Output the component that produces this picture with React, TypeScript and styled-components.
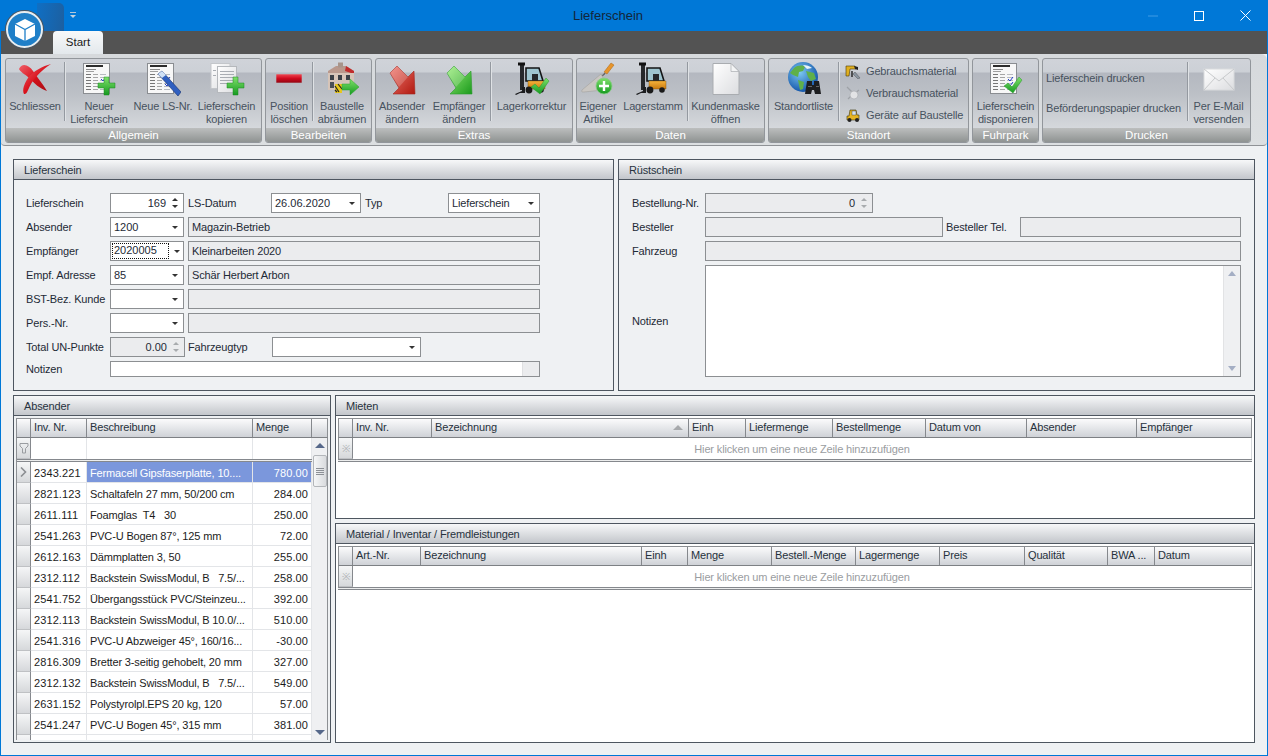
import React from "react";
import styled, { createGlobalStyle } from "styled-components";

const GlobalStyle = createGlobalStyle`
  html, body { margin: 0; padding: 0; background: #eff1f3; }
  body {
    font-family: "Liberation Sans", Arial, sans-serif;
    font-size: 11px;
    letter-spacing: -0.15px;
    color: #1e2a36;
  }
  * { box-sizing: border-box; }
`;

const Window = styled.div`
  width: 1268px;
  height: 756px;
  border: 1px solid #0078d7;
  border-top: 0;
  display: flex;
  flex-direction: column;
  overflow: hidden;
  background: #eff1f3;
  position: relative;
`;

/* ---------- title bar ---------- */

const TitleBar = styled.div`
  height: 31px;
  flex: none;
  background: #0078d7;
  display: flex;
  align-items: center;
`;

const QuickAccess = styled.div`
  width: 85px;
  height: 100%;
  position: relative;
`;

const AppTile = styled.div`
  position: absolute;
  left: 36px;
  top: 3px;
  width: 27px;
  height: 28px;
  border-radius: 0 5px 0 0;
  background: linear-gradient(100deg, #0f6fc4, #1d5f9f);
`;

const QuickArrow = styled.div`
  position: absolute;
  left: 69px;
  top: 12px;
  width: 6px;
  height: 6px;
  border-top: 1px solid #b4c6d8;
  &::after {
    content: "";
    position: absolute;
    left: 0;
    top: 2px;
    border-left: 3px solid transparent;
    border-right: 3px solid transparent;
    border-top: 3px solid #c3d2e0;
  }
`;

const AppOrb = styled.div`
  position: absolute;
  left: 5px;
  top: 11px;
  width: 37px;
  height: 37px;
  border-radius: 50%;
  background: #1f7fc8;
  border: 2px solid #e8eef2;
  box-shadow: 0 0 0 1px #4a5560;
  display: flex;
  align-items: center;
  justify-content: center;
  z-index: 5;
`;

const TitleText = styled.div`
  flex: 1;
  text-align: center;
  font-size: 13px;
  letter-spacing: 0;
  color: #13263a;
  padding-bottom: 1px;
`;

const WindowControls = styled.div`
  display: flex;
  width: 137px;
  height: 100%;
`;

const ControlButton = styled.div`
  width: 46px;
  flex: none;
  display: flex;
  align-items: center;
  justify-content: center;
`;

/* ---------- ribbon ---------- */

const TabStrip = styled.div`
  height: 23px;
  flex: none;
  background: #535353;
  padding-left: 52px;
  display: flex;
  align-items: flex-end;
`;

const Tab = styled.div`
  width: 50px;
  height: 23px;
  border-radius: 4px 4px 0 0;
  background: linear-gradient(#f8f9fa, #e3e8ec);
  color: #1a1a1a;
  font-size: 11.5px;
  letter-spacing: 0;
  text-align: center;
  line-height: 23px;
`;

const Ribbon = styled.div`
  height: 92px;
  flex: none;
  background: linear-gradient(#d6d9dc, #dcdfe1);
  border-radius: 0 6px 4px 4px;
  border-bottom: 1px solid #8f9296;
  margin: 0;
  padding: 4px 0 0 4px;
  display: flex;
  gap: 3px;
`;

const Group = styled.div<{ $w: number }>`
  width: ${(p) => p.$w}px;
  height: 85px;
  flex: none;
  border: 1px solid #92969b;
  border-radius: 3px;
  display: flex;
  flex-direction: column;
  overflow: hidden;
  background: linear-gradient(#d0d3d9 0, #ccd0d6 13px, #b4b8c0 14px, #bcc0c6 35px, #d5d8dc 69px);
`;

const GroupBody = styled.div`
  height: 69px;
  flex: none;
  display: flex;
`;

const GroupLabel = styled.div`
  height: 14px;
  flex: none;
  background: linear-gradient(#bcbebe, #8f9392);
  color: #fff;
  text-align: center;
  line-height: 14px;
  font-size: 11.5px;
  letter-spacing: 0;
`;

const BigButton = styled.div<{ $w: number }>`
  width: ${(p) => p.$w}px;
  flex: none;
  display: flex;
  flex-direction: column;
  align-items: center;
  padding-top: 3px;
`;

const BigLabel = styled.div`
  margin-top: 4px;
  text-align: center;
  line-height: 13px;
  color: #47525e;
  white-space: nowrap;
`;

const Separator = styled.div`
  width: 1px;
  flex: none;
  margin: 3px 0 7px;
  background: #9499a0;
  box-shadow: 1px 0 0 #dfe2e5;
`;

const SmallList = styled.div<{ $w: number }>`
  width: ${(p) => p.$w}px;
  flex: none;
  padding: 1px 0 0 6px;
  display: flex;
  flex-direction: column;
`;

const SmallItem = styled.div`
  height: 22px;
  display: flex;
  align-items: center;
  gap: 5px;
  color: #47525e;
  white-space: nowrap;
`;

const PrintList = styled.div`
  width: 144px;
  flex: none;
  padding: 4px 0 0 3px;
  display: flex;
  flex-direction: column;
  color: #47525e;
`;

const PrintItem = styled.div`
  height: 30px;
  display: flex;
  align-items: center;
  white-space: nowrap;
`;

/* ---------- panels ---------- */

const Content = styled.div`
  flex: 1;
  min-height: 0;
  padding: 13px 12px 12px;
  display: flex;
  flex-direction: column;
  gap: 4px;
`;

const TopRow = styled.div`
  height: 232px;
  flex: none;
  display: flex;
  gap: 4px;
`;

const BottomRow = styled.div`
  flex: 1;
  min-height: 0;
  display: flex;
  gap: 4px;
`;

const RightStack = styled.div`
  flex: 1;
  min-width: 0;
  display: flex;
  flex-direction: column;
  gap: 4px;
`;

const Panel = styled.section<{ $w?: number; $h?: number; $white?: boolean }>`
  ${(p) => (p.$w ? `width: ${p.$w}px; flex: none;` : "flex: 1; min-width: 0;")}
  ${(p) => (p.$h ? `height: ${p.$h}px; flex: none;` : "")}
  border: 1px solid #4e5660;
  display: flex;
  flex-direction: column;
  background: ${(p) => (p.$white ? "#fff" : "#eff1f3")};
  min-height: 0;
`;

const PanelHeader = styled.div`
  height: 20px;
  flex: none;
  padding: 1px 0 0 10px;
  background: linear-gradient(#f7f8f9, #c3c6cb);
  border-bottom: 1px solid #4e5660;
  display: flex;
  align-items: center;
  color: #27323e;
`;

const FormBody = styled.div<{ $pl?: number }>`
  padding: 13px 12px 0 ${(p) => p.$pl ?? 12}px;
  display: flex;
  flex-direction: column;
  gap: 4px;
`;

const FormRow = styled.div<{ $h?: number }>`
  height: ${(p) => p.$h ?? 20}px;
  display: flex;
  align-items: center;
`;

const FieldLabel = styled.div<{ $w: number; $ml?: number }>`
  width: ${(p) => p.$w}px;
  margin-left: ${(p) => p.$ml ?? 0}px;
  flex: none;
  white-space: nowrap;
  color: #1e2a36;
`;

const Field = styled.div<{ $w?: number; $ml?: number; $disabled?: boolean; $h?: number }>`
  ${(p) => (p.$w ? `width: ${p.$w}px; flex: none;` : "flex: 1; min-width: 0;")}
  height: ${(p) => p.$h ?? 20}px;
  margin-left: ${(p) => p.$ml ?? 0}px;
  border: 1px solid #8c8f92;
  background: ${(p) => (p.$disabled ? "#ebecee" : "#fff")};
  display: flex;
  align-items: center;
  color: #1e2a36;
  position: relative;
`;

const FieldText = styled.div<{ $right?: boolean; $pl?: number; $num?: boolean }>`
  flex: 1;
  min-width: 0;
  padding-left: ${(p) => p.$pl ?? 3}px;
  padding-right: 2px;
  text-align: ${(p) => (p.$right ? "right" : "left")};
  white-space: nowrap;
  letter-spacing: ${(p) => (p.$num ? "0" : "inherit")};
`;

const FocusText = styled.div`
  flex: none;
  width: 57px;
  height: 16px;
  margin-left: 1px;
  padding-left: 2px;
  line-height: 15px;
  letter-spacing: 0;
  outline: 1px dotted #111;
  outline-offset: -1px;
`;

const DropArrow = styled.div`
  width: 16px;
  flex: none;
  display: flex;
  justify-content: center;
  &::after {
    content: "";
    border-left: 3px solid transparent;
    border-right: 3px solid transparent;
    border-top: 3px solid #333;
  }
`;

const Spinner = styled.div<{ $muted?: boolean }>`
  width: 14px;
  flex: none;
  display: flex;
  flex-direction: column;
  gap: 4px;
  align-items: center;
  margin-right: 1px;
  --spin: ${(p) => (p.$muted ? "#a8abae" : "#333")};
  &::before {
    content: "";
    border-left: 3px solid transparent;
    border-right: 3px solid transparent;
    border-bottom: 3px solid var(--spin);
  }
  &::after {
    content: "";
    border-left: 3px solid transparent;
    border-right: 3px solid transparent;
    border-top: 3px solid var(--spin);
  }
`;

const NoteEnd = styled.div`
  width: 17px;
  height: 100%;
  flex: none;
  background: #ebecee;
  border-left: 1px solid #dfe0e2;
  margin-left: auto;
`;

const TextAreaScroll = styled.div`
  width: 17px;
  height: 100%;
  flex: none;
  margin-left: auto;
  background: #eff0f2;
  border-left: 1px solid #e2e3e5;
  display: flex;
  flex-direction: column;
  align-items: center;
  justify-content: space-between;
  padding: 5px 0;
`;

const ScrollArrow = styled.div<{ $down?: boolean; $color?: string; $size?: number }>`
  width: 0;
  height: 0;
  flex: none;
  border-left: ${(p) => p.$size ?? 4}px solid transparent;
  border-right: ${(p) => p.$size ?? 4}px solid transparent;
  ${(p) =>
    p.$down
      ? `border-top: 5px solid ${p.$color ?? "#a4aec4"};`
      : `border-bottom: 5px solid ${p.$color ?? "#a4aec4"};`}
`;

/* ---------- data grids ---------- */

const GridWrap = styled.div`
  flex: 1;
  min-height: 0;
  padding: 2px 2px 2px;
  display: flex;
  flex-direction: column;
`;

const HeaderRow = styled.div<{ $cols: string }>`
  height: 20px;
  flex: none;
  display: grid;
  grid-template-columns: ${(p) => p.$cols};
  border: 1px solid #8c8f93;
  border-bottom-color: #7d8084;
  background: linear-gradient(#fbfbfc, #cfd2d7);
`;

const HeaderCell = styled.div`
  border-right: 1px solid #85888d;
  padding-left: 3px;
  line-height: 17px;
  color: #26313c;
  white-space: nowrap;
  overflow: hidden;
  position: relative;
  &:last-child {
    border-right: 0;
  }
`;

const SortMark = styled.div`
  position: absolute;
  right: 5px;
  top: 6px;
  border-left: 5px solid transparent;
  border-right: 5px solid transparent;
  border-bottom: 5px solid #a7a9ac;
`;

const NewRow = styled.div`
  height: 21px;
  flex: none;
  display: flex;
  border-left: 1px solid #8c8f93;
  border-right: 1px solid #d5d7da;
`;

const NewRowHint = styled.div`
  flex: 1;
  text-align: center;
  line-height: 22px;
  color: #9a9da1;
`;

const IndicatorCell = styled.div`
  width: 14px;
  flex: none;
  border-right: 1px solid #85888d;
  border-bottom: 1px solid #bfc1c4;
  background: linear-gradient(#f5f6f7, #d6d8db);
  display: flex;
  align-items: center;
  justify-content: center;
  color: #b0b3b6;
  font-size: 10px;
`;

const DoubleRule = styled.div`
  height: 3px;
  flex: none;
  border-top: 1px solid #85888d;
  border-bottom: 1px solid #85888d;
  background: #eceded;
`;

const ListFrame = styled.div`
  flex: 1;
  min-height: 0;
  display: flex;
  border-left: 1px solid #8c8f93;
  border-right: 1px solid #8c8f93;
  overflow: hidden;
`;

const ListColumn = styled.div`
  width: 295px;
  flex: none;
  display: flex;
  flex-direction: column;
  background: #fff;
  overflow: hidden;
`;

const FilterRow = styled.div`
  height: 21px;
  flex: none;
  display: grid;
  grid-template-columns: 14px 56px 166px 59px;
`;

const FilterCell = styled.div`
  border-right: 1px solid #e3e5e8;
`;

const DataRow = styled.div`
  height: 21px;
  flex: none;
  display: grid;
  grid-template-columns: 14px 56px 166px 59px;
  line-height: 21px;
`;

const DataCell = styled.div<{ $right?: boolean; $selected?: boolean; $num?: boolean }>`
  padding: 1px 3px 0;
  white-space: pre;
  overflow: hidden;
  text-align: ${(p) => (p.$right ? "right" : "left")};
  letter-spacing: ${(p) => (p.$num ? "0.1px" : "inherit")};
  border-right: 1px solid #e3e5e8;
  border-bottom: 1px solid #e3e5e8;
  background: ${(p) => (p.$selected ? "#7b97dc" : "#fff")};
  color: ${(p) => (p.$selected ? "#fff" : "#1c1c1c")};
`;

const ScrollTrack = styled.div`
  width: 15px;
  flex: none;
  background: #eff0f2;
  display: flex;
  flex-direction: column;
  align-items: center;
  padding: 5px 0 5px;
`;

const ScrollThumb = styled.div`
  width: 14px;
  height: 32px;
  margin-top: 7px;
  border: 1px solid #b3b6ba;
  border-radius: 2px;
  background: linear-gradient(90deg, #f5f6f7, #d9dbde);
  display: flex;
  flex-direction: column;
  justify-content: center;
  align-items: center;
  gap: 1px;
  i {
    display: block;
    width: 8px;
    height: 1px;
    background: #8c9096;
  }
`;

const Spacer = styled.div`
  flex: 1;
`;

/* ---------- icons ---------- */

const IconSvg = styled.svg`
  width: 36px;
  height: 34px;
  flex: none;
  display: block;
`;

const SmallSvg = styled.svg`
  width: 16px;
  height: 16px;
  flex: none;
`;

const SharedDefs = styled.svg`
  position: absolute;
  width: 0;
  height: 0;
`;

const Defs = () => (
  <SharedDefs>
    <defs>
      <linearGradient id="red" x1="0" y1="0" x2="1" y2="1">
        <stop offset="0" stopColor="#f0606a" />
        <stop offset="0.5" stopColor="#d8121c" />
        <stop offset="1" stopColor="#a90d14" />
      </linearGradient>
      <linearGradient id="redBar" x1="0" y1="0" x2="0" y2="1">
        <stop offset="0" stopColor="#f14a55" />
        <stop offset="0.5" stopColor="#cf0a1e" />
        <stop offset="1" stopColor="#8e0612" />
      </linearGradient>
      <linearGradient id="green" x1="0" y1="0" x2="0" y2="1">
        <stop offset="0" stopColor="#7fe06a" />
        <stop offset="1" stopColor="#159a20" />
      </linearGradient>
      <linearGradient id="greenDiag" x1="0" y1="0" x2="1" y2="1">
        <stop offset="0" stopColor="#9bee7a" />
        <stop offset="1" stopColor="#1a9a1c" />
      </linearGradient>
      <linearGradient id="redDiag" x1="0" y1="0" x2="1" y2="1">
        <stop offset="0" stopColor="#f07a70" />
        <stop offset="1" stopColor="#b0180f" />
      </linearGradient>
      <linearGradient id="paper" x1="0" y1="0" x2="1" y2="1">
        <stop offset="0" stopColor="#ffffff" />
        <stop offset="1" stopColor="#dcdde0" />
      </linearGradient>
      <linearGradient id="orange" x1="0" y1="0" x2="0" y2="1">
        <stop offset="0" stopColor="#f6b23a" />
        <stop offset="1" stopColor="#c97a10" />
      </linearGradient>
      <radialGradient id="sea" cx="0.4" cy="0.35" r="0.7">
        <stop offset="0" stopColor="#7cc8f2" />
        <stop offset="1" stopColor="#0e4fa6" />
      </radialGradient>
    </defs>
  </SharedDefs>
);

const PlusMark = ({ x, y }: { x: number; y: number }) => (
  <path
    transform={`translate(${x} ${y})`}
    d="M6 0h5v6h6v5h-6v7H6v-7H0V6h6z"
    fill="url(#green)"
    stroke="#1b8a22"
    strokeWidth="0.5"
  />
);

const CheckMark = ({ x, y }: { x: number; y: number }) => (
  <path
    transform={`translate(${x} ${y})`}
    d="M0 9l4-3 4 4L15 0l3 3-9 13z"
    fill="url(#green)"
    stroke="#2a9a2c"
    strokeWidth="0.5"
  />
);

const SheetLines = () => (
  <g>
    <rect x="5" y="3" width="17" height="2" fill="#2c2c2c" />
    <rect x="5" y="7" width="10" height="1" fill="#8a8a8a" />
    <rect x="5" y="9" width="8" height="1" fill="#a0a0a0" />
    {[12, 15, 18, 21, 24, 27].map((y) => (
      <g key={y}>
        <rect x="5" y={y} width="5" height="1" fill="#777" />
        <rect x="12" y={y} width="5" height="1" fill="#a5a5a5" />
        <rect x="19" y={y} width="6" height="1" fill="#b8bbc0" />
      </g>
    ))}
    <path d="M20 17l2 2 3-4M20 22l2 2 3-4" stroke="#2340c8" strokeWidth="1" fill="none" />
  </g>
);

const Sheet = () => (
  <g>
    <rect x="2.5" y="1.5" width="26" height="30" fill="#f7f7f7" stroke="#8a8d91" />
    <SheetLines />
  </g>
);

const CloseIcon = () => (
  <IconSvg viewBox="0 0 36 34">
    <path d="M2 7C5 0 12 3 16 9c4 6 9 12 14 20-7-2-13-8-18-13C8 12 3 10 2 7z" fill="url(#red)" />
    <path d="M34 2C26 4 16 9 11 16 7 22 5 28 7 32c3 1 4-5 7-10C18 15 26 7 34 2z" fill="url(#red)" />
  </IconSvg>
);

const NewDocIcon = () => (
  <IconSvg viewBox="0 0 36 34">
    <Sheet />
    <PlusMark x={17} y={15} />
  </IconSvg>
);

const NewNumberIcon = () => (
  <IconSvg viewBox="0 0 36 34">
    <Sheet />
    <path d="M13 12l4-3 19 21-3 4z" fill="#2f5fc0" stroke="#17336f" strokeWidth="0.6" />
    <path d="M13 12l4-3 4 4-4 3z" fill="#cfe0f5" />
  </IconSvg>
);

const CopyDocIcon = () => (
  <IconSvg viewBox="0 0 36 34">
    <rect x="2" y="1.5" width="19" height="25" fill="url(#paper)" stroke="#c3c6ca" />
    <rect x="8.5" y="4.5" width="19" height="26" fill="url(#paper)" stroke="#b5b8bc" />
    {[9, 12, 15, 18, 21].map((y) => (
      <rect key={y} x="11" y={y} width="14" height="1" fill="#a9adb3" />
    ))}
    <rect x="4" y="8" width="3" height="1" fill="#a9adb3" />
    <rect x="4" y="13" width="3" height="1" fill="#a9adb3" />
    <PlusMark x={18} y={15} />
  </IconSvg>
);

const MinusIcon = () => (
  <IconSvg viewBox="0 0 36 34">
    <rect x="5" y="12" width="26" height="9" fill="url(#redBar)" stroke="#b8bcc0" strokeWidth="0.6" />
  </IconSvg>
);

const HouseIcon = () => (
  <IconSvg viewBox="0 0 36 34">
    <path d="M4 9l8-5h10l8 5v3H4z" fill="#b9988c" />
    <path d="M22 4l8 5v3l-9-3z" fill="#c02c2c" />
    <rect x="14" y="0.5" width="5" height="5" fill="#a8948a" />
    <rect x="4" y="11" width="26" height="17" fill="#d6c4b8" />
    <rect x="6" y="13" width="4" height="5" fill="#3a3f46" />
    <rect x="14" y="13" width="4" height="5" fill="#3a3f46" />
    <rect x="22" y="13" width="4" height="5" fill="#3a3f46" />
    <rect x="6" y="20" width="4" height="6" fill="#4a4f55" />
    <rect x="11" y="22" width="7" height="9" fill="#e7c71a" />
    <path d="M11 24l4 6M14 22l4 5M11 28l2 2" stroke="#222" strokeWidth="1.2" />
    <path d="M18 22h8v-5l9 8-9 8v-5h-8z" fill="url(#green)" stroke="#2aa52e" strokeWidth="0.5" />
  </IconSvg>
);

const DiagArrow = ({ fill, edge }: { fill: string; edge: string }) => (
  <IconSvg viewBox="0 0 36 34">
    <path
      d="M6 11l7-7 11 11 6-6 1 23H9l6-6z"
      fill={`url(#${fill})`}
      stroke={edge}
      strokeWidth="0.6"
    />
    <path d="M6 11l7-7 11 11-9 10z" fill="#fff" opacity="0.2" />
  </IconSvg>
);

const ForkliftParts = () => (
  <g>
    <rect x="6" y="1" width="4" height="27" fill="#26282b" />
    <rect x="4" y="0.5" width="7" height="3" fill="#111" />
    <path d="M1 32l7-3v-4h3v6H6l-4 2z" fill="#1c1d1f" />
    <path d="M12 6h13l4 13H12z" fill="#9ec4cf" stroke="#141516" strokeWidth="1.6" />
    <rect x="18" y="12" width="6" height="7" fill="#25272a" />
    <path d="M14 19h17v8H14z" fill="url(#orange)" stroke="#7b4c08" strokeWidth="0.4" />
    <circle cx="15" cy="28" r="3.4" fill="#1a1a1a" />
    <circle cx="27" cy="28" r="2.8" fill="#1a1a1a" />
  </g>
);

const ForkliftIcon = () => (
  <IconSvg viewBox="0 0 36 34">
    <ForkliftParts />
  </IconSvg>
);

const ForkliftCheckIcon = () => (
  <IconSvg viewBox="0 0 36 34">
    <ForkliftParts />
    <CheckMark x={17} y={16} />
  </IconSvg>
);

const TrowelIcon = () => (
  <IconSvg viewBox="0 0 36 34">
    <path d="M24 10L31 1l3 2-7 9z" fill="#e8952a" stroke="#a86412" strokeWidth="0.5" />
    <path d="M25 11c-1 2-3 3-5 3" stroke="#666" strokeWidth="1.4" fill="none" />
    <path d="M21 12L2 28c-1 2 0 2 2 2l19-2c2-5 1-12-2-16z" fill="#c9c6c2" stroke="#9c9a97" strokeWidth="0.5" />
    <circle cx="24" cy="24" r="8" fill="url(#green)" stroke="#8cc98a" strokeWidth="0.8" />
    <path d="M24 19v10M19 24h10" stroke="#fff" strokeWidth="2.4" />
  </IconSvg>
);

const PageIcon = () => (
  <IconSvg viewBox="0 0 36 34">
    <path d="M5 1.5h18l8 8v23H5z" fill="url(#paper)" stroke="#a9acb0" />
    <path d="M23 1.5v8h8z" fill="#f3f4f5" stroke="#a9acb0" strokeWidth="0.7" />
  </IconSvg>
);

const GlobeIcon = () => (
  <IconSvg viewBox="0 0 36 34">
    <circle cx="17" cy="15" r="15" fill="url(#sea)" />
    <path d="M8 6c4-3 9-3 11-1l-2 4-4 1-1 5-5-2-3-2zM20 9l8 2 2 6-5 2-3-4zM12 18l6 2-1 7-3 1z" fill="#5fb04a" />
    <path d="M17 3c3 0 7 1 9 3l-5 1z" fill="#e8f3f6" />
    <path d="M21 19h5v4h2v-4h5l2 13h-6l-1-4h-2l-1 4h-6z" fill="#1d1e20" />
    <rect x="22" y="24" width="4" height="1" fill="#666" />
    <rect x="30" y="24" width="3" height="1" fill="#666" />
  </IconSvg>
);

const EnvelopeIcon = () => (
  <IconSvg viewBox="0 0 36 34">
    <rect x="3" y="7" width="30" height="21" fill="url(#paper)" stroke="#d9dbdd" />
    <path d="M3 7l15 12L33 7M3 28l11-12M33 28L22 16" fill="none" stroke="#c8cacc" />
  </IconSvg>
);

const DrillIcon = () => (
  <SmallSvg viewBox="0 0 16 16">
    <path d="M1 3h9l1 3H5l-1 7H1z" fill="#e0b020" stroke="#4a3a08" strokeWidth="0.6" />
    <path d="M9 3l4 1v3l-3-1z" fill="#222" />
    <path d="M10 9l5 6-2 1-5-5z" fill="#8a95a0" stroke="#444" strokeWidth="0.4" />
    <path d="M7 8v6" stroke="#222" strokeWidth="1.4" />
  </SmallSvg>
);

const ScrewsIcon = () => (
  <SmallSvg viewBox="0 0 16 16">
    <path d="M2 2l6 6M14 5L9 9M3 14l5-5" stroke="#9ea2a7" strokeWidth="1.3" />
    <circle cx="9" cy="10" r="4" fill="#e2e3e5" stroke="#a5a8ac" strokeWidth="0.6" />
  </SmallSvg>
);

const LoaderIcon = () => (
  <SmallSvg viewBox="0 0 16 16">
    <path d="M5 3h6l1 5h2v5H2V9h2z" fill="#e6b422" stroke="#3a3206" strokeWidth="0.6" />
    <rect x="7" y="4" width="4" height="4" fill="#d7e4ea" stroke="#333" strokeWidth="0.4" />
    <circle cx="4.5" cy="13" r="2" fill="#222" />
    <circle cx="12" cy="13" r="2" fill="#222" />
  </SmallSvg>
);

const CubeIcon = () => (
  <svg width="26" height="26" viewBox="0 0 26 26">
    <path d="M13 2l10 5v12l-10 5-10-5V7z" fill="#fff" />
    <path d="M13 12.5v11.5M3 7l10 5.5L23 7" stroke="#1f7fc8" strokeWidth="1.3" fill="none" />
  </svg>
);

/* ---------- data ---------- */

const rows: [string, string, string][] = [
  ["2343.221", "Fermacell Gipsfaserplatte, 10....", "780.00"],
  ["2821.123", "Schaltafeln 27 mm, 50/200 cm", "284.00"],
  ["2611.111", "Foamglas  T4   30", "250.00"],
  ["2541.263", "PVC-U Bogen 87°, 125 mm", "72.00"],
  ["2612.163", "Dämmplatten 3, 50", "255.00"],
  ["2312.112", "Backstein SwissModul, B   7.5/...", "258.00"],
  ["2541.752", "Übergangsstück PVC/Steinzeu...", "392.00"],
  ["2312.113", "Backstein SwissModul, B 10.0/...", "510.00"],
  ["2541.316", "PVC-U Abzweiger 45°, 160/16...", "-30.00"],
  ["2816.309", "Bretter 3-seitig gehobelt, 20 mm", "327.00"],
  ["2312.132", "Backstein SwissModul, B   7.5/...", "549.00"],
  ["2631.152", "Polystyrolpl.EPS 20 kg, 120", "57.00"],
  ["2541.247", "PVC-U Bogen 45°, 315 mm", "381.00"],
  ["", "", ""],
];

const mietenCols = "14px 79px 257px 57px 87px 93px 101px 110px 114px";
const mietenHeads = ["", "Inv. Nr.", "Bezeichnung", "Einh", "Liefermenge", "Bestellmenge", "Datum von", "Absender", "Empfänger"];
const materialCols = "14px 68px 221px 46px 84px 84px 84px 85px 83px 47px 96px";
const materialHeads = ["", "Art.-Nr.", "Bezeichnung", "Einh", "Menge", "Bestell.-Menge", "Lagermenge", "Preis", "Qualität", "BWA ...", "Datum"];

const Big = ({ w, icon, label }: { w: number; icon: React.ReactNode; label: React.ReactNode }) => (
  <BigButton $w={w}>
    {icon}
    <BigLabel>{label}</BigLabel>
  </BigButton>
);

const EmptyGrid = ({ cols, heads, sorted }: { cols: string; heads: string[]; sorted?: boolean }) => (
  <GridWrap>
    <HeaderRow $cols={cols}>
      {heads.map((h, i) => (
        <HeaderCell key={i}>
          {h}
          {sorted && h === "Bezeichnung" && <SortMark />}
        </HeaderCell>
      ))}
    </HeaderRow>
    <NewRow>
      <IndicatorCell>※</IndicatorCell>
      <NewRowHint>Hier klicken um eine neue Zeile hinzuzufügen</NewRowHint>
    </NewRow>
    <DoubleRule />
  </GridWrap>
);

const App = () => (
  <Window>
    <GlobalStyle />
    <Defs />
    <TitleBar>
      <QuickAccess>
        <AppTile />
        <QuickArrow />
        <AppOrb>
          <CubeIcon />
        </AppOrb>
      </QuickAccess>
      <TitleText>Lieferschein</TitleText>
      <WindowControls>
        <ControlButton>
          <svg width="10" height="10" viewBox="0 0 10 10">
            <path d="M0 5h10" stroke="#3f9be5" />
          </svg>
        </ControlButton>
        <ControlButton>
          <svg width="10" height="10" viewBox="0 0 10 10">
            <rect x="0.5" y="0.5" width="9" height="9" fill="none" stroke="#fff" />
          </svg>
        </ControlButton>
        <ControlButton>
          <svg width="11" height="11" viewBox="0 0 11 11">
            <path d="M0.5 0.5l10 10M10.5 0.5l-10 10" stroke="#fff" />
          </svg>
        </ControlButton>
      </WindowControls>
    </TitleBar>

    <TabStrip>
      <Tab>Start</Tab>
    </TabStrip>

    <Ribbon>
      <Group $w={257}>
        <GroupBody>
          <Big w={58} icon={<CloseIcon />} label="Schliessen" />
          <Separator />
          <Big w={68} icon={<NewDocIcon />} label={<>Neuer<br />Lieferschein</>} />
          <Big w={60} icon={<NewNumberIcon />} label="Neue LS-Nr." />
          <Big w={67} icon={<CopyDocIcon />} label={<>Lieferschein<br />kopieren</>} />
        </GroupBody>
        <GroupLabel>Allgemein</GroupLabel>
      </Group>
      <Group $w={107}>
        <GroupBody>
          <Big w={46} icon={<MinusIcon />} label={<>Position<br />löschen</>} />
          <Separator />
          <Big w={58} icon={<HouseIcon />} label={<>Baustelle<br />abräumen</>} />
        </GroupBody>
        <GroupLabel>Bearbeiten</GroupLabel>
      </Group>
      <Group $w={198}>
        <GroupBody>
          <Big w={52} icon={<DiagArrow fill="redDiag" edge="#a3271e" />} label={<>Absender<br />ändern</>} />
          <Big w={62} icon={<DiagArrow fill="greenDiag" edge="#2a9a2c" />} label={<>Empfänger<br />ändern</>} />
          <Separator />
          <Big w={81} icon={<ForkliftCheckIcon />} label="Lagerkorrektur" />
        </GroupBody>
        <GroupLabel>Extras</GroupLabel>
      </Group>
      <Group $w={189}>
        <GroupBody>
          <Big w={42} icon={<TrowelIcon />} label={<>Eigener<br />Artikel</>} />
          <Big w={68} icon={<ForkliftIcon />} label="Lagerstamm" />
          <Separator />
          <Big w={75} icon={<PageIcon />} label={<>Kundenmaske<br />öffnen</>} />
        </GroupBody>
        <GroupLabel>Daten</GroupLabel>
      </Group>
      <Group $w={201}>
        <GroupBody>
          <Big w={69} icon={<GlobeIcon />} label="Standortliste" />
          <Separator />
          <SmallList $w={129}>
            <SmallItem><DrillIcon />Gebrauchsmaterial</SmallItem>
            <SmallItem><ScrewsIcon />Verbrauchsmaterial</SmallItem>
            <SmallItem><LoaderIcon />Geräte auf Baustelle</SmallItem>
          </SmallList>
        </GroupBody>
        <GroupLabel>Standort</GroupLabel>
      </Group>
      <Group $w={67}>
        <GroupBody>
          <Big
            w={65}
            icon={
              <IconSvg viewBox="0 0 36 34">
                <Sheet />
                <CheckMark x={16} y={15} />
              </IconSvg>
            }
            label={<>Lieferschein<br />disponieren</>}
          />
        </GroupBody>
        <GroupLabel>Fuhrpark</GroupLabel>
      </Group>
      <Group $w={209}>
        <GroupBody>
          <PrintList>
            <PrintItem>Lieferschein drucken</PrintItem>
            <PrintItem>Beförderungspapier drucken</PrintItem>
          </PrintList>
          <Separator />
          <Big w={61} icon={<EnvelopeIcon />} label={<>Per E-Mail<br />versenden</>} />
        </GroupBody>
        <GroupLabel>Drucken</GroupLabel>
      </Group>
    </Ribbon>

    <Content>
      <TopRow>
        <Panel $w={601}>
          <PanelHeader>Lieferschein</PanelHeader>
          <FormBody>
            <FormRow>
              <FieldLabel $w={84}>Lieferschein</FieldLabel>
              <Field $w={74}>
                <FieldText $right $num>169</FieldText>
                <Spinner />
              </Field>
              <FieldLabel $w={83} $ml={4}>LS-Datum</FieldLabel>
              <Field $w={90}>
                <FieldText $num>26.06.2020</FieldText>
                <DropArrow />
              </Field>
              <FieldLabel $w={83} $ml={4}>Typ</FieldLabel>
              <Field $w={92}>
                <FieldText>Lieferschein</FieldText>
                <DropArrow />
              </Field>
            </FormRow>
            <FormRow>
              <FieldLabel $w={84}>Absender</FieldLabel>
              <Field $w={74}>
                <FieldText $num>1200</FieldText>
                <DropArrow />
              </Field>
              <Field $w={352} $ml={4} $disabled>
                <FieldText>Magazin-Betrieb</FieldText>
              </Field>
            </FormRow>
            <FormRow>
              <FieldLabel $w={84}>Empfänger</FieldLabel>
              <Field $w={74}>
                <FocusText>2020005</FocusText>
                <Spacer />
                <DropArrow />
              </Field>
              <Field $w={352} $ml={4} $disabled>
                <FieldText>Kleinarbeiten 2020</FieldText>
              </Field>
            </FormRow>
            <FormRow>
              <FieldLabel $w={84}>Empf. Adresse</FieldLabel>
              <Field $w={74}>
                <FieldText $num>85</FieldText>
                <DropArrow />
              </Field>
              <Field $w={352} $ml={4} $disabled>
                <FieldText>Schär Herbert Arbon</FieldText>
              </Field>
            </FormRow>
            <FormRow>
              <FieldLabel $w={84}>BST-Bez. Kunde</FieldLabel>
              <Field $w={74}>
                <FieldText />
                <DropArrow />
              </Field>
              <Field $w={352} $ml={4} $disabled />
            </FormRow>
            <FormRow>
              <FieldLabel $w={84}>Pers.-Nr.</FieldLabel>
              <Field $w={74}>
                <FieldText />
                <DropArrow />
              </Field>
              <Field $w={352} $ml={4} $disabled />
            </FormRow>
            <FormRow>
              <FieldLabel $w={84}>Total UN-Punkte</FieldLabel>
              <Field $w={75} $disabled>
                <FieldText $right $num>0.00</FieldText>
                <Spinner $muted />
              </Field>
              <FieldLabel $w={84} $ml={3}>Fahrzeugtyp</FieldLabel>
              <Field $w={149}>
                <FieldText />
                <DropArrow />
              </Field>
            </FormRow>
            <FormRow $h={16}>
              <FieldLabel $w={84}>Notizen</FieldLabel>
              <Field $w={430} $h={16}>
                <NoteEnd />
              </Field>
            </FormRow>
          </FormBody>
        </Panel>
        <Panel>
          <PanelHeader>Rüstschein</PanelHeader>
          <FormBody $pl={13}>
            <FormRow>
              <FieldLabel $w={73}>Bestellung-Nr.</FieldLabel>
              <Field $w={168} $disabled>
                <FieldText $right $num>0</FieldText>
                <Spinner $muted />
              </Field>
            </FormRow>
            <FormRow>
              <FieldLabel $w={73}>Besteller</FieldLabel>
              <Field $w={238} $disabled />
              <FieldLabel $w={74} $ml={3}>Besteller Tel.</FieldLabel>
              <Field $w={221} $disabled />
            </FormRow>
            <FormRow>
              <FieldLabel $w={73}>Fahrzeug</FieldLabel>
              <Field $w={536} $disabled />
            </FormRow>
            <FormRow $h={112}>
              <FieldLabel $w={73}>Notizen</FieldLabel>
              <Field $w={536} $h={112}>
                <TextAreaScroll>
                  <ScrollArrow />
                  <ScrollArrow $down />
                </TextAreaScroll>
              </Field>
            </FormRow>
          </FormBody>
        </Panel>
      </TopRow>

      <BottomRow>
        <Panel $w={318}>
          <PanelHeader>Absender</PanelHeader>
          <GridWrap>
            <HeaderRow $cols="14px 56px 166px 59px 15px">
              <HeaderCell />
              <HeaderCell>Inv. Nr.</HeaderCell>
              <HeaderCell>Beschreibung</HeaderCell>
              <HeaderCell>Menge</HeaderCell>
              <HeaderCell />
            </HeaderRow>
            <ListFrame>
              <ListColumn>
                <FilterRow>
                  <IndicatorCell>
                    <svg width="10" height="12" viewBox="0 0 10 12">
                      <path d="M1 1.5h8v2.5L6.5 6.5V11h-3V6.5L1 4z" fill="none" stroke="#9a9da1" />
                    </svg>
                  </IndicatorCell>
                  <FilterCell />
                  <FilterCell />
                  <FilterCell />
                </FilterRow>
                <DoubleRule />
                {rows.map((r, i) => (
                  <DataRow key={i}>
                    <IndicatorCell>
                      {i === 0 && (
                        <svg width="7" height="10" viewBox="0 0 7 10">
                          <path d="M1 0.5L5.5 5 1 9.5" fill="none" stroke="#8c8f93" strokeWidth="1.6" />
                        </svg>
                      )}
                    </IndicatorCell>
                    <DataCell $num>{r[0]}</DataCell>
                    <DataCell $selected={i === 0}>{r[1]}</DataCell>
                    <DataCell $right $num $selected={i === 0}>{r[2]}</DataCell>
                  </DataRow>
                ))}
              </ListColumn>
              <ScrollTrack>
                <ScrollArrow $color="#56688a" $size={5} />
                <ScrollThumb>
                  <i /><i /><i /><i />
                </ScrollThumb>
                <Spacer />
                <ScrollArrow $down $color="#56688a" $size={5} />
              </ScrollTrack>
            </ListFrame>
          </GridWrap>
        </Panel>
        <RightStack>
          <Panel $h={124} $white>
            <PanelHeader>Mieten</PanelHeader>
            <EmptyGrid cols={mietenCols} heads={mietenHeads} sorted />
          </Panel>
          <Panel $white>
            <PanelHeader>Material / Inventar / Fremdleistungen</PanelHeader>
            <EmptyGrid cols={materialCols} heads={materialHeads} />
          </Panel>
        </RightStack>
      </BottomRow>
    </Content>
  </Window>
);

export default App;
